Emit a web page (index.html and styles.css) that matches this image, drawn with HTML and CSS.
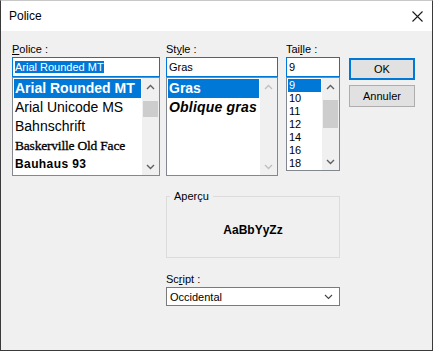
FILE: index.html
```html
<!DOCTYPE html>
<html lang="fr">
<head>
    <meta charset="UTF-8">
    <title>Police</title>
    <link rel="stylesheet" href="styles.css">
</head>
<body>
    <div class="dialog">
        <div class="titlebar">
            <span class="title">Police</span>
            <svg class="close" width="11" height="11" viewBox="0 0 11 11">
                <path d="M0.5 0.5 L10.5 10.5 M10.5 0.5 L0.5 10.5" stroke="#1a1a1a" stroke-width="1.1" fill="none"/>
            </svg>
        </div>
        <div class="content">
            <div class="top">
                <div class="col col-font">
                    <span class="label"><u>P</u>olice :</span>
                    <div class="field"><span class="selected-text">Arial Rounded MT</span></div>
                    <div class="list">
                        <ul class="items">
                            <li class="on f-rounded">Arial Rounded MT</li>
                            <li class="f-unicode">Arial Unicode MS</li>
                            <li class="f-bahn">Bahnschrift</li>
                            <li class="f-basker">Baskerville Old Face</li>
                            <li class="f-bauhaus">Bauhaus 93</li>
                        </ul>
                        <div class="scrollbar">
                            <span class="arrow"><svg width="9" height="6" viewBox="0 0 9 6"><polyline points="1,5 4.5,1.5 8,5" /></svg></span>
                            <span class="track"><span class="thumb thumb-font"></span></span>
                            <span class="arrow"><svg width="9" height="6" viewBox="0 0 9 6"><polyline points="1,1 4.5,4.5 8,1" /></svg></span>
                        </div>
                    </div>
                </div>
                <div class="col col-style">
                    <span class="label">St<u>y</u>le :</span>
                    <div class="field">Gras</div>
                    <div class="list">
                        <ul class="items">
                            <li class="on s-bold">Gras</li>
                            <li class="s-bold-italic">Oblique gras</li>
                        </ul>
                        <div class="scrollbar disabled">
                            <span class="arrow"><svg width="9" height="6" viewBox="0 0 9 6"><polyline points="1,5 4.5,1.5 8,5" /></svg></span>
                            <span class="track"></span>
                            <span class="arrow"><svg width="9" height="6" viewBox="0 0 9 6"><polyline points="1,1 4.5,4.5 8,1" /></svg></span>
                        </div>
                    </div>
                </div>
                <div class="col col-size">
                    <span class="label">Tai<u>l</u>le :</span>
                    <div class="field">9</div>
                    <div class="list list-size">
                        <ul class="items items-size">
                            <li class="on">9</li>
                            <li>10</li>
                            <li>11</li>
                            <li>12</li>
                            <li>14</li>
                            <li>16</li>
                            <li>18</li>
                        </ul>
                        <div class="scrollbar">
                            <span class="arrow"><svg width="9" height="6" viewBox="0 0 9 6"><polyline points="1,5 4.5,1.5 8,5" /></svg></span>
                            <span class="track"><span class="thumb thumb-size"></span></span>
                            <span class="arrow"><svg width="9" height="6" viewBox="0 0 9 6"><polyline points="1,1 4.5,4.5 8,1" /></svg></span>
                        </div>
                    </div>
                </div>
                <div class="buttons">
                    <button class="btn btn-default">OK</button>
                    <button class="btn">Annuler</button>
                </div>
            </div>
            <div class="lower">
                <fieldset class="preview">
                    <legend>Aperçu</legend>
                    <div class="sample">AaBbYyZz</div>
                </fieldset>
                <span class="label label-script">Sc<u>r</u>ipt :</span>
                <div class="select">
                    <span>Occidental</span>
                    <svg width="9" height="6" viewBox="0 0 9 6"><polyline points="1,1 4.5,4.5 8,1" fill="none" stroke="#444" stroke-width="1.1"/></svg>
                </div>
            </div>
        </div>
    </div>
</body>
</html>
```

FILE: styles.css
```css
body {
    margin: 0;
    font-family: "Liberation Sans", Arial, sans-serif;
    font-size: 11px;
    color: #000;
    background-color: #fff;
}
.dialog {
    width: 433px;
    height: 351px;
    box-sizing: border-box;
    border: 1px solid #3a3a3a;
    border-top-color: #c8c8c8;
    background-color: #f0f0f0;
    display: flex;
    flex-direction: column;
}
.titlebar {
    height: 30px;
    flex-shrink: 0;
    background-color: #fff;
    display: flex;
    align-items: center;
    justify-content: space-between;
    padding: 0 9px 0 8px;
}
.title {
    font-size: 12px;
    line-height: 14px;
}
.content {
    padding: 11px 0 0 11px;
}
.top {
    display: flex;
    align-items: flex-start;
}
.col-font {
    width: 148px;
    margin-right: 6px;
}
.col-style {
    width: 112px;
    margin-right: 8px;
}
.col-size {
    width: 54px;
    margin-right: 9px;
}
.label {
    display: block;
    height: 15px;
    line-height: 15px;
}
.field {
    height: 20px;
    box-sizing: border-box;
    border: 1px solid #0078d7;
    background-color: #fff;
    padding-left: 2px;
    line-height: 18px;
    white-space: nowrap;
    overflow: hidden;
}
.selected-text {
    background-color: #0078d7;
    color: #fff;
}
.list {
    display: flex;
    height: 99px;
    box-sizing: border-box;
    border: 1px solid #828790;
    background-color: #fff;
}
.list-size {
    height: 94px;
}
.items {
    flex: 1;
    list-style: none;
    margin: 0;
    padding: 1px;
    overflow: hidden;
    min-width: 0;
}
.items li {
    height: 19px;
    line-height: 19px;
    padding-left: 1px;
    white-space: nowrap;
    overflow: hidden;
}
.items li.on {
    background-color: #0078d7;
    color: #fff;
}
.f-rounded {
    font-size: 14px;
    font-weight: bold;
}
.f-unicode,
.f-bahn {
    font-size: 14px;
}
.f-basker {
    font-family: "Liberation Serif", serif;
    font-size: 13.5px;
    letter-spacing: -0.2px;
    -webkit-text-stroke: 0.3px #000;
}
.f-bauhaus {
    font-size: 12px;
    font-weight: 900;
    letter-spacing: 0.4px;
}
.s-bold {
    font-size: 14px;
    font-weight: bold;
}
.s-bold-italic {
    font-size: 14px;
    font-weight: bold;
    font-style: italic;
    letter-spacing: 0.2px;
}
.items-size li {
    height: 13px;
    line-height: 13px;
    font-size: 11px;
}
.scrollbar {
    width: 17px;
    flex-shrink: 0;
    background-color: #f0f0f0;
    display: flex;
    flex-direction: column;
}
.arrow {
    height: 17px;
    display: flex;
    align-items: center;
    justify-content: center;
}
.arrow polyline {
    fill: none;
    stroke: #606060;
    stroke-width: 1.4;
}
.disabled .arrow polyline {
    stroke: #c0c0c0;
}
.track {
    flex: 1;
    display: flex;
    flex-direction: column;
}
.thumb {
    display: block;
    margin: 0 1px;
    background-color: #cdcdcd;
}
.thumb-font {
    margin-top: 6px;
    height: 16px;
}
.thumb-size {
    margin-top: 5px;
    height: 28px;
}
.buttons {
    width: 66px;
    padding-top: 16px;
    display: flex;
    flex-direction: column;
    gap: 5px;
}
.btn {
    width: 66px;
    height: 22px;
    box-sizing: border-box;
    margin: 0;
    padding: 0;
    border: 1px solid #adadad;
    background-color: #e1e1e1;
    font-family: "Liberation Sans", Arial, sans-serif;
    font-size: 11px;
    color: #000;
}
.btn-default {
    border: 2px solid #0078d7;
}
.lower {
    margin-left: 154px;
    width: 174px;
}
.preview {
    margin: 13px 0 0;
    padding: 0;
    border: 1px solid #dcdcdc;
}
.preview legend {
    margin-left: 3px;
    padding: 0 4px;
    line-height: 14px;
    font-size: 11px;
}
.sample {
    height: 54px;
    line-height: 54px;
    text-align: center;
    font-size: 12px;
    font-weight: bold;
}
.label-script {
    margin-top: 14px;
}
.select {
    height: 19px;
    box-sizing: border-box;
    border: 1px solid #7a7a7a;
    background-color: #fff;
    padding: 0 6px 0 3px;
    display: flex;
    align-items: center;
    justify-content: space-between;
}
```
